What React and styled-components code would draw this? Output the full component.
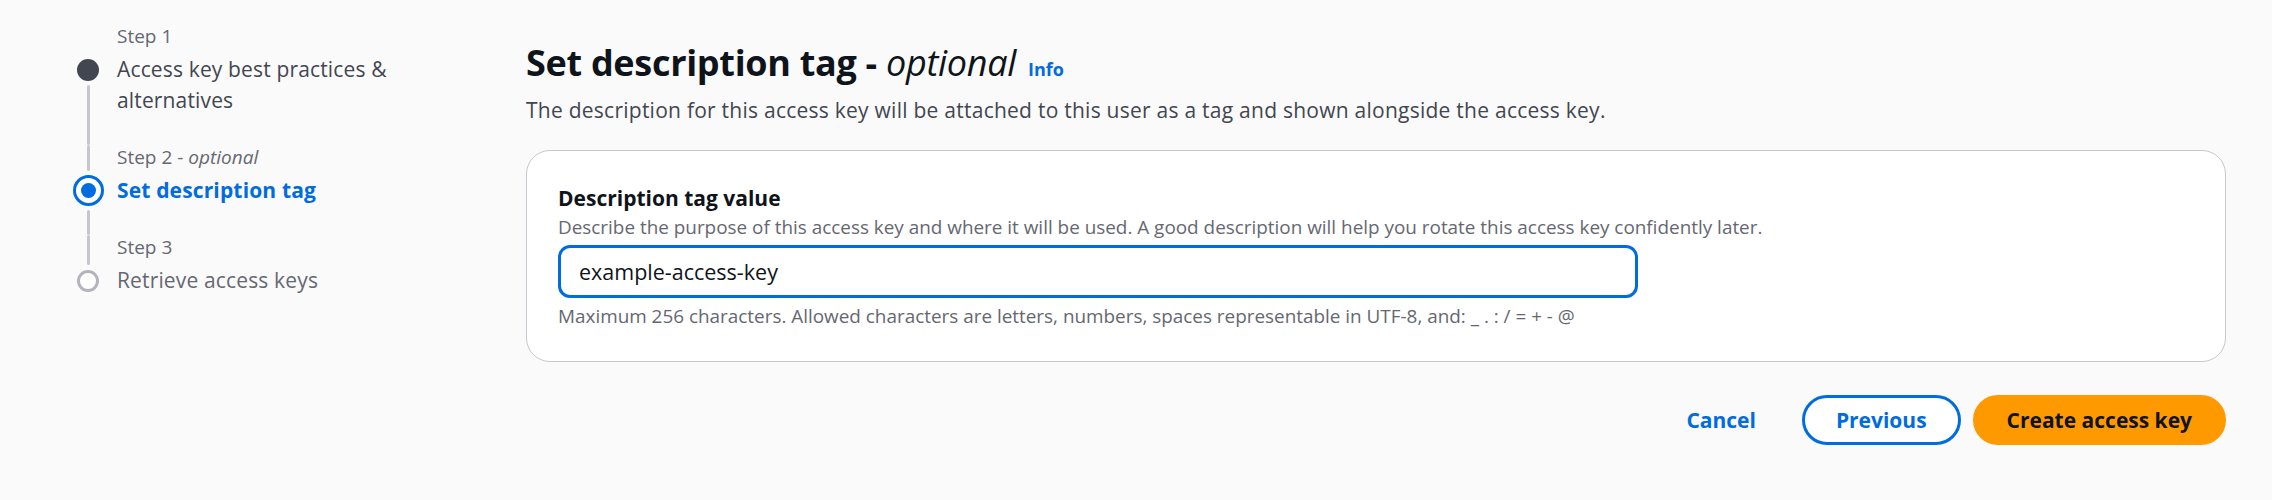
import React from 'react';
import styled, { createGlobalStyle, css } from 'styled-components';

const GlobalStyle = createGlobalStyle`
  html, body { margin: 0; padding: 0; background: #fafafa; }
  body {
    font-family: "Open Sans", "Noto Sans", Arial, sans-serif;
    color: #0f141a;
    -webkit-font-smoothing: antialiased;
  }
  * { box-sizing: border-box; }
`;

const Page = styled.div`
  display: grid;
  grid-template-columns: 400px 1fr;
  column-gap: 54px;
  padding: 24px 46px 0 72px;
  min-height: 500px;
  background: #fafafa;
`;

const Nav = styled.ol`
  list-style: none;
  margin: 0;
  padding: 0;
`;

const StepItem = styled.li`
  display: grid;
  grid-template-columns: 32px 1fr;
  grid-template-rows: auto auto;
  column-gap: 13px;
`;

const TopRail = styled.div`
  grid-column: 1;
  grid-row: 1;
  display: flex;
  flex-direction: column;
  align-items: center;
`;

const BottomRail = styled.div`
  grid-column: 1;
  grid-row: 2;
  display: flex;
  flex-direction: column;
  align-items: center;
`;

const DotBox = styled.div`
  height: 31px;
  display: flex;
  align-items: center;
  justify-content: center;
`;

const Connector = styled.div`
  width: 3px;
  flex: 1 1 auto;
  background: #c6c6cd;
  border-radius: 2px;
  margin-top: ${(p) => p.$mt || 0}px;
  margin-bottom: ${(p) => p.$mb || 0}px;
`;

const Dot = styled.span`
  display: flex;
  align-items: center;
  justify-content: center;
  border-radius: 50%;
  ${(p) =>
    p.$state === 'done' &&
    css`
      width: 22px;
      height: 22px;
      background: #424650;
    `}
  ${(p) =>
    p.$state === 'current' &&
    css`
      width: 31px;
      height: 31px;
      border: 3px solid #006ce0;
      background: #fff;
      &::after {
        content: '';
        width: 15px;
        height: 15px;
        border-radius: 50%;
        background: #006ce0;
      }
    `}
  ${(p) =>
    p.$state === 'todo' &&
    css`
      width: 22px;
      height: 22px;
      border: 3px solid #b4b4bb;
      background: #fff;
    `}
`;

const StepLabel = styled.div`
  grid-column: 2;
  grid-row: 1;
  font-size: 19px;
  line-height: 24px;
  color: #656871;
  margin-bottom: 6px;
`;

const StepTitle = styled.div`
  grid-column: 2;
  grid-row: 2;
  font-size: 21px;
  line-height: 31px;
  letter-spacing: 0.15px;
  padding-bottom: ${(p) => (p.$last ? 0 : 29)}px;
  color: ${(p) =>
    p.$state === 'current' ? '#006ce0' : p.$state === 'done' ? '#424650' : '#656871'};
  font-weight: ${(p) => (p.$state === 'current' ? 700 : 400)};
`;

const Main = styled.main`
  display: flex;
  flex-direction: column;
  padding-top: 16px;
`;

const Heading = styled.h1`
  margin: 0;
  font-size: 36px;
  line-height: 45px;
  font-weight: 700;
  color: #0f141a;
  letter-spacing: -0.3px;

  i {
    font-weight: 400;
  }
`;

const InfoLink = styled.a`
  font-size: 18px;
  font-weight: 700;
  color: #006ce0;
  text-decoration: none;
  margin-left: 12px;
  letter-spacing: 0;
`;

const Description = styled.p`
  margin: 3px 0 0;
  font-size: 21px;
  line-height: 30px;
  letter-spacing: 0.25px;
  color: #424650;
`;

const Container = styled.section`
  margin-top: 25px;
  background: #fff;
  border: 1px solid #c6c6cd;
  border-radius: 24px;
  padding: 32px 31px 33px;
  display: flex;
  flex-direction: column;
`;

const FieldLabel = styled.label`
  font-size: 21px;
  line-height: 30px;
  font-weight: 700;
  color: #0f141a;
  margin-bottom: 2px;
`;

const FieldHint = styled.div`
  font-size: 18.9px;
  line-height: 24px;
  color: #656871;
  margin-top: ${(p) => p.$mt || 0}px;
  margin-bottom: ${(p) => p.$mb || 0}px;
`;

const TextInput = styled.input`
  width: 1080px;
  height: 53px;
  border: 3px solid #006ce0;
  border-radius: 12px;
  padding: 0 18px;
  font-family: inherit;
  font-size: 21.5px;
  color: #0f141a;
  background: #fff;
  outline: none;
`;

const Actions = styled.div`
  margin-top: 33px;
  display: flex;
  justify-content: flex-end;
  gap: 12px;
`;

const Button = styled.button`
  height: 50px;
  padding: 0 31px;
  border-radius: 25px;
  border: 3px solid transparent;
  font-family: inherit;
  font-size: 21px;
  font-weight: 700;
  line-height: 1;
  display: inline-flex;
  align-items: center;
  cursor: pointer;
  ${(p) =>
    p.$variant === 'link' &&
    css`
      background: transparent;
      color: #006ce0;
    `}
  ${(p) =>
    p.$variant === 'normal' &&
    css`
      background: #fff;
      border-color: #006ce0;
      color: #006ce0;
    `}
  ${(p) =>
    p.$variant === 'primary' &&
    css`
      background: #ff9900;
      border-color: #ff9900;
      color: #0f141a;
    `}
`;

const steps = [
  { label: 'Step 1', title: 'Access key best practices & alternatives', state: 'done' },
  {
    label: (
      <>
        Step 2 - <i>optional</i>
      </>
    ),
    title: 'Set description tag',
    state: 'current',
  },
  { label: 'Step 3', title: 'Retrieve access keys', state: 'todo' },
];

export default function App() {
  return (
    <>
      <GlobalStyle />
      <Page>
        <Nav>
          {steps.map((s, i) => {
            const first = i === 0;
            const last = i === steps.length - 1;
            return (
              <StepItem key={i}>
                <TopRail>
                  {!first && <Connector $mb={s.state === 'current' ? 4 : 0} />}
                </TopRail>
                <StepLabel>{s.label}</StepLabel>
                <BottomRail>
                  <DotBox>
                    <Dot $state={s.state} />
                  </DotBox>
                  {!last && <Connector $mt={s.state === 'current' ? 4 : 0} />}
                </BottomRail>
                <StepTitle $state={s.state} $last={last}>
                  {s.title}
                </StepTitle>
              </StepItem>
            );
          })}
        </Nav>
        <Main>
          <Heading>
            Set description tag - <i>optional</i>
            <InfoLink href="#">Info</InfoLink>
          </Heading>
          <Description>
            The description for this access key will be attached to this user as a tag and shown
            alongside the access key.
          </Description>
          <Container>
            <FieldLabel htmlFor="desc-tag">Description tag value</FieldLabel>
            <FieldHint $mb={6}>
              Describe the purpose of this access key and where it will be used. A good description
              will help you rotate this access key confidently later.
            </FieldHint>
            <TextInput id="desc-tag" defaultValue="example-access-key" />
            <FieldHint $mt={6}>
              Maximum 256 characters. Allowed characters are letters, numbers, spaces representable
              in UTF-8, and: _ . : / = + - @
            </FieldHint>
          </Container>
          <Actions>
            <Button $variant="link">Cancel</Button>
            <Button $variant="normal">Previous</Button>
            <Button $variant="primary">Create access key</Button>
          </Actions>
        </Main>
      </Page>
    </>
  );
}
